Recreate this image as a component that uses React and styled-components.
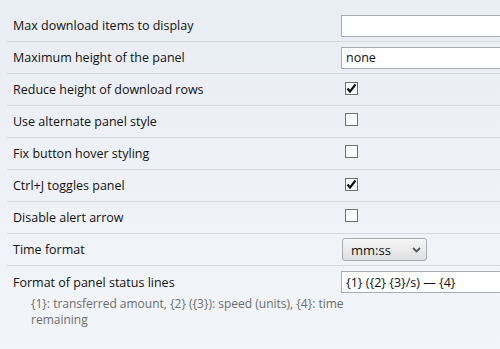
import React from "react";
import styled, { createGlobalStyle } from "styled-components";

const Global = createGlobalStyle`
  html, body {
    margin: 0;
    padding: 0;
  }
  body {
    width: 500px;
    height: 349px;
    overflow: hidden;
    background: linear-gradient(180deg, #e9edf4 0%, #eef1f7 50%, #f2f5f9 100%);
    font-family: "Open Sans", "Noto Sans", sans-serif;
    font-size: 12.5px;
    color: #111;
  }
`;

const Page = styled.div`
  padding: 10px 0 0 7px;
`;

const Row = styled.div`
  box-sizing: border-box;
  display: grid;
  grid-template-columns: 334px 1fr;
  align-items: ${(p) => (p.$top ? "start" : "center")};
  height: ${(p) => (p.$top ? "auto" : "32px")};
  border-bottom: ${(p) => (p.$last ? "none" : "1px solid #d4d9e1")};
  padding-top: ${(p) => (p.$top ? "5px" : "0")};
`;

const Label = styled.div`
  padding-left: 6px;
  padding-top: ${(p) => (p.$top ? "3px" : "0")};
  white-space: nowrap;
`;

const TextInput = styled.input`
  box-sizing: border-box;
  width: 170px;
  height: 22px;
  border: 1px solid #a9adb3;
  background: #fff;
  font: inherit;
  padding: 0 4px;
  color: #111;
  outline: none;
`;

const CheckBox = styled.span`
  display: inline-flex;
  align-items: center;
  justify-content: center;
  box-sizing: border-box;
  width: 13px;
  height: 13px;
  margin-left: 4px;
  border: 1px solid #707070;
  background: #fff;
`;

const Select = styled.div`
  box-sizing: border-box;
  width: 85px;
  height: 23px;
  margin-left: 1px;
  display: flex;
  align-items: center;
  justify-content: space-between;
  padding: 0 5px 0 8px;
  font-size: 13px;
  border: 1px solid #a7abb2;
  border-radius: 3px;
  background: linear-gradient(180deg, #f6f6f6 0%, #ebebeb 50%, #dedede 100%);
`;

const Hint = styled.div`
  grid-column: 1 / -1;
  padding: 3px 0 0 24px;
  width: 322px;
  font-size: 12px;
  line-height: 16px;
  color: #6d6d6d;
`;

const Check = () => (
  <svg width="11" height="11" viewBox="0 0 11 11">
    <path d="M1.5 5.5 L4 8.5 L9.5 1.5" fill="none" stroke="#111" strokeWidth="2.2" strokeLinejoin="miter" />
  </svg>
);

const Chevron = () => (
  <svg width="9" height="6" viewBox="0 0 9 6">
    <path d="M1 1 L4.5 4.5 L8 1" fill="none" stroke="#555" strokeWidth="1.8" />
  </svg>
);

const checks = [
  ["Reduce height of download rows", true],
  ["Use alternate panel style", false],
  ["Fix button hover styling", false],
  ["Ctrl+J toggles panel", true],
  ["Disable alert arrow", false],
];

export default function App() {
  return (
    <>
      <Global />
      <Page>
        <Row>
          <Label>Max download items to display</Label>
          <TextInput defaultValue="" />
        </Row>
        <Row>
          <Label>Maximum height of the panel</Label>
          <TextInput defaultValue="none" />
        </Row>
        {checks.map(([label, on]) => (
          <Row key={label}>
            <Label>{label}</Label>
            <div>
              <CheckBox>{on && <Check />}</CheckBox>
            </div>
          </Row>
        ))}
        <Row>
          <Label>Time format</Label>
          <Select>
            <span>mm:ss</span>
            <Chevron />
          </Select>
        </Row>
        <Row $top $last>
          <Label $top>Format of panel status lines</Label>
          <TextInput defaultValue="{1} ({2} {3}/s) — {4}" />
          <Hint>{"{1}: transferred amount, {2} ({3}): speed (units), {4}: time remaining"}</Hint>
        </Row>
      </Page>
    </>
  );
}
